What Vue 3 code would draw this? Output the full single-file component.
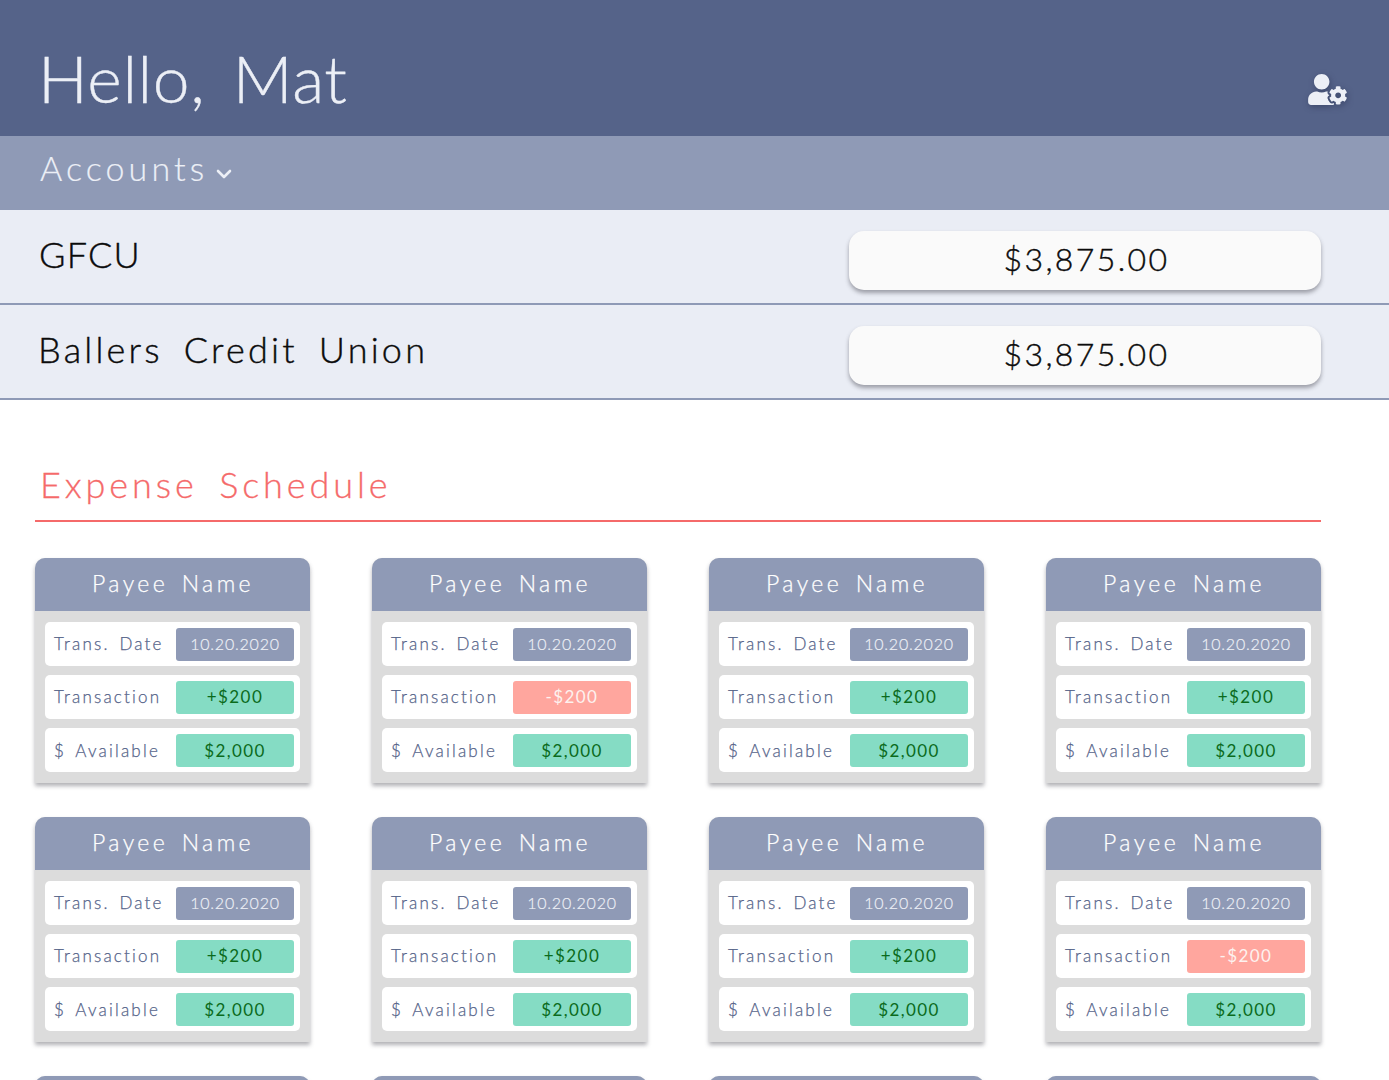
<script setup>
const accounts = [
  { name: 'GFCU', balance: '$3,875.00' },
  { name: 'Ballers Credit Union', balance: '$3,875.00' },
]
const negatives = new Set([1, 7])
const cards = Array.from({ length: 12 }, (_, i) => ({
  id: i,
  negative: negatives.has(i),
  folded: i >= 8,
}))
</script>

<template>
  <div class="page">
    <header class="top">
      <h1 class="hello">Hello, Mat</h1>
      <svg class="user-icon" viewBox="0 0 640 512" aria-hidden="true">
        <path fill="currentColor" d="M610.5 373.3c2.6-14.1 2.6-28.5 0-42.6l25.8-14.9c3-1.7 4.3-5.2 3.3-8.5-6.7-21.6-18.2-41.2-33.2-57.4-2.3-2.5-6-3.1-9-1.4l-25.8 14.9c-10.9-9.3-23.4-16.5-36.9-21.3v-29.8c0-3.4-2.4-6.4-5.7-7.1-22.3-5-45-4.8-66.2 0-3.3.7-5.7 3.7-5.7 7.1v29.8c-13.5 4.8-26 12-36.9 21.3l-25.8-14.9c-2.9-1.7-6.7-1.1-9 1.4-15 16.2-26.5 35.8-33.2 57.4-1 3.3.4 6.8 3.3 8.5l25.8 14.9c-2.6 14.1-2.6 28.5 0 42.6l-25.8 14.9c-3 1.7-4.3 5.2-3.3 8.5 6.7 21.6 18.2 41.1 33.2 57.4 2.3 2.5 6 3.1 9 1.4l25.8-14.9c10.9 9.3 23.4 16.5 36.9 21.3v29.8c0 3.4 2.4 6.4 5.7 7.1 22.3 5 45 4.8 66.2 0 3.3-.7 5.7-3.7 5.7-7.1v-29.8c13.5-4.8 26-12 36.9-21.3l25.8 14.9c2.9 1.7 6.7 1.1 9-1.4 15-16.2 26.5-35.8 33.2-57.4 1-3.3-.4-6.8-3.3-8.5l-25.8-14.9zM496 400.5c-26.8 0-48.5-21.8-48.5-48.5s21.8-48.5 48.5-48.5 48.5 21.8 48.5 48.5-21.7 48.5-48.5 48.5zM224 256c70.7 0 128-57.3 128-128S294.7 0 224 0 96 57.3 96 128s57.3 128 128 128zm201.2 226.5c-2.3-1.2-4.6-2.6-6.8-3.9l-7.9 4.6c-6 3.4-12.8 5.3-19.6 5.3-10.9 0-21.4-4.6-28.9-12.6-18.3-19.8-32.3-43.9-40.2-69.6-5.5-17.7 1.9-36.4 17.9-45.7l7.9-4.6c-.1-2.6-.1-5.2 0-7.8l-7.9-4.6c-16-9.2-23.4-28-17.9-45.7.9-2.9 2.2-5.8 3.2-8.7-3.8-.3-7.5-1.2-11.4-1.2h-16.7c-22.2 10.2-46.9 16-72.9 16s-50.6-5.8-72.9-16h-16.7C60.2 288 0 348.2 0 422.4V464c0 26.5 21.5 48 48 48h352c10.1 0 19.5-3.2 27.2-8.5-1.2-3.8-2-7.7-2-11.8v-9.2z"/>
      </svg>
    </header>

    <nav class="sub">
      <span class="sub-label">Accounts</span>
      <svg class="chevron" viewBox="0 0 16 10" aria-hidden="true">
        <path d="M2 2 L8 8 L14 2" fill="none" stroke="currentColor" stroke-width="2.6" stroke-linecap="round" stroke-linejoin="round"/>
      </svg>
    </nav>

    <section class="accounts">
      <div v-for="a in accounts" :key="a.name" class="account">
        <span class="account-name">{{ a.name }}</span>
        <div class="balance">{{ a.balance }}</div>
      </div>
    </section>

    <section class="schedule">
      <h2 class="schedule-title">Expense Schedule</h2>
      <div class="grid">
        <article v-for="c in cards" :key="c.id" class="card">
          <template v-if="!c.folded">
            <div class="card-head">Payee Name</div>
            <div class="card-body">
              <div class="line">
                <span class="line-label">Trans. Date</span>
                <span class="val date">10.20.2020</span>
              </div>
              <div class="line">
                <span class="line-label">Transaction</span>
                <span class="val" :class="c.negative ? 'neg' : 'pos'">{{ c.negative ? '-$200' : '+$200' }}</span>
              </div>
              <div class="line">
                <span class="line-label">$ Available</span>
                <span class="val pos">$2,000</span>
              </div>
            </div>
          </template>
          <div v-else class="card-head"></div>
        </article>
      </div>
    </section>
  </div>
</template>

<style>
html, body { margin: 0; background: #fff; }
</style>

<style scoped>
.page {
  width: 1389px;
  height: 1080px;
  overflow: hidden;
  font-family: "Lato", "Open Sans", sans-serif;
  font-weight: 300;
  background: #fff;
}
.top {
  height: 136px;
  background: #556389;
  color: #eceff6;
  display: flex;
  align-items: center;
  justify-content: space-between;
  padding: 0 42px 0 38px;
  box-sizing: border-box;
}
.hello {
  margin: 20px 0 0;
  font-size: 66px;
  font-weight: 300;
  line-height: 1;
  letter-spacing: 0.6px;
  word-spacing: 9px;
  -webkit-text-stroke: 0.4px #eceff6;
}
.user-icon {
  width: 39px;
  height: 31px;
  margin-top: 42px;
  color: #eceff6;
  filter: drop-shadow(1px 2px 3px rgba(30, 40, 70, 0.45));
}
.sub {
  height: 74px;
  background: #8f9ab6;
  color: #eceff6;
  display: flex;
  align-items: center;
  padding: 0 0 12px 40px;
  box-sizing: border-box;
}
.sub-label {
  font-size: 34px;
  letter-spacing: 4.1px;
  -webkit-text-stroke: 0.2px #eceff6;
}
.chevron {
  width: 16px;
  height: 10px;
  margin: 14px 0 0 8px;
}
.account {
  height: 95px;
  background: #eaedf5;
  border-bottom: 2px solid #8f9ab6;
  box-sizing: border-box;
  display: flex;
  align-items: flex-start;
  justify-content: space-between;
  padding: 21px 68px 0 38px;
}
.account-name {
  font-size: 36px;
  line-height: 46px;
  letter-spacing: 3.2px;
  word-spacing: 8px;
  color: #0b0b0b;
  font-weight: 300;
  -webkit-text-stroke: 0.4px #0b0b0b;
}
.account:first-child .account-name {
  letter-spacing: 1.2px;
  padding-left: 1px;
}
.balance {
  width: 472px;
  height: 59px;
  border-radius: 15px;
  background: #fafafa;
  box-shadow: 0 3px 4px rgba(60, 60, 70, 0.45);
  display: flex;
  align-items: center;
  justify-content: center;
  padding: 0 0 5px 3px;
  box-sizing: border-box;
  font-size: 32px;
  font-weight: 300;
  letter-spacing: 2.4px;
  color: #0b0b0b;
  -webkit-text-stroke: 0.4px #0b0b0b;
}
.schedule {
  padding: 60px 68px 0 35px;
}
.schedule-title {
  margin: 0;
  height: 60px;
  border-bottom: 2px solid #f56a6a;
  padding-left: 5px;
  font-size: 36px;
  font-weight: 300;
  line-height: 48px;
  letter-spacing: 3.9px;
  word-spacing: 8px;
  color: #f56a6a;
  -webkit-text-stroke: 0.3px #f56a6a;
}
.grid {
  margin-top: 36px;
  display: grid;
  grid-template-columns: repeat(4, 275px);
  justify-content: space-between;
  row-gap: 34px;
}
.card {
  background: #dcdcdc;
  border-radius: 10px 10px 0 0;
  box-shadow: 0 3px 4px rgba(60, 60, 70, 0.4);
  height: 225px;
}
.card-head {
  height: 53px;
  background: #8f9ab6;
  border-radius: 10px 10px 0 0;
  color: #fff;
  display: flex;
  align-items: center;
  justify-content: center;
  padding: 0 0 3px 1px;
  box-sizing: border-box;
  font-size: 23px;
  font-weight: 300;
  letter-spacing: 3.4px;
  word-spacing: 4px;
  -webkit-text-stroke: 0.25px #fff;
}
.card-body {
  padding: 11px 10px 0;
  display: flex;
  flex-direction: column;
  gap: 9px;
}
.line {
  height: 44px;
  background: #fff;
  border-radius: 5px;
  display: flex;
  align-items: center;
  justify-content: space-between;
  padding: 0 6px 0 9px;
}
.line-label {
  font-size: 17px;
  font-weight: 300;
  letter-spacing: 2.2px;
  word-spacing: 3px;
  line-height: 1;
  padding-bottom: 2px;
  color: #556389;
  -webkit-text-stroke: 0.25px #556389;
}
.line:last-child .line-label,
.line:last-child .val {
  padding-bottom: 0;
}
.val {
  width: 118px;
  height: 33px;
  border-radius: 3px;
  display: flex;
  align-items: center;
  justify-content: center;
  padding-bottom: 2px;
  box-sizing: border-box;
  font-size: 17px;
  font-weight: 400;
  letter-spacing: 1.4px;
}
.date { background: #8f9ab6; color: #eef0f6; font-size: 16px; font-weight: 300; letter-spacing: 0.8px; -webkit-text-stroke: 0.2px #eef0f6; }
.pos { background: #85dcc4; color: #0b6b1c; }
.neg { background: #ffa69e; color: #fdf2ef; }
</style>
